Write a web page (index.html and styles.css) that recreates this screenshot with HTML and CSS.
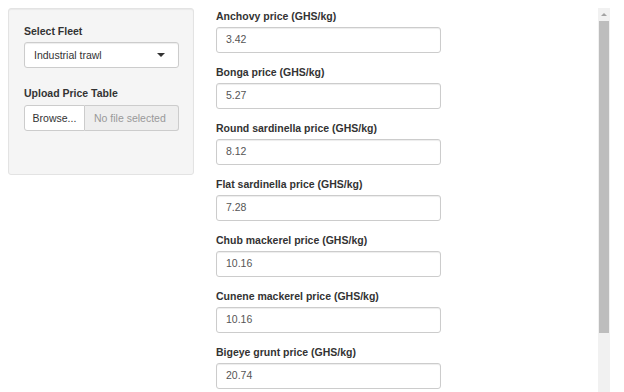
FILE: index.html
```html
<!DOCTYPE html>
<html>
<head>
<meta charset="utf-8">
<link rel="stylesheet" href="styles.css">
</head>
<body>
<div class="layout">
  <aside class="well">
    <div class="group group-select">
      <label class="lbl">Select Fleet</label>
      <div class="select">
        <span>Industrial trawl</span>
        <span class="caret"></span>
      </div>
    </div>
    <div class="group group-file">
      <label class="lbl">Upload Price Table</label>
      <div class="file">
        <span class="browse">Browse...</span>
        <span class="fname">No file selected</span>
      </div>
    </div>
  </aside>
  <main class="main">
    <div class="group"><label class="lbl">Anchovy price (GHS/kg)</label><div class="input">3.42</div></div>
    <div class="group"><label class="lbl">Bonga price (GHS/kg)</label><div class="input">5.27</div></div>
    <div class="group"><label class="lbl">Round sardinella price (GHS/kg)</label><div class="input">8.12</div></div>
    <div class="group"><label class="lbl">Flat sardinella price (GHS/kg)</label><div class="input">7.28</div></div>
    <div class="group"><label class="lbl">Chub mackerel price (GHS/kg)</label><div class="input">10.16</div></div>
    <div class="group"><label class="lbl">Cunene mackerel price (GHS/kg)</label><div class="input">10.16</div></div>
    <div class="group"><label class="lbl">Bigeye grunt price (GHS/kg)</label><div class="input">20.74</div></div>
  </main>
</div>
<div class="scrollbar">
  <div class="sb-up"><span class="sb-arrow"></span></div>
  <div class="sb-thumb"></div>
</div>
</body>
</html>
```
FILE: styles.css
```css
html, body {
  margin: 0;
  padding: 0;
  height: 100%;
  overflow: hidden;
  background: #fff;
}
body {
  font-family: "Liberation Sans", Arial, Helvetica, sans-serif;
  font-size: 10.5px;
  color: #333;
}
.layout {
  display: flex;
  align-items: flex-start;
  padding: 8px 0 0 8px;
}
.well {
  box-sizing: border-box;
  width: 186px;
  height: 167px;
  background: #f5f5f5;
  border: 1px solid #e3e3e3;
  border-radius: 3px;
  box-shadow: inset 0 1px 1px rgba(0,0,0,0.05);
  padding: 14.5px 14px 0 15px;
}
.main {
  margin-left: 22px;
  padding-top: 0.5px;
  width: 225px;
}
.lbl {
  display: block;
  font-weight: bold;
  line-height: 15px;
  margin-bottom: 3.75px;
}
.group {
  margin-bottom: 11.75px;
}
.input {
  box-sizing: border-box;
  height: 25.5px;
  border: 1px solid #ccc;
  border-radius: 3px;
  box-shadow: inset 0 1px 1px rgba(0,0,0,0.075);
  padding: 0 9px;
  line-height: 23.5px;
  color: #555;
  background: #fff;
}
.group-select {
  margin-bottom: 18.5px;
}
.select {
  box-sizing: border-box;
  height: 25.5px;
  border: 1px solid #ccc;
  border-radius: 3px;
  background: #fff;
  padding: 0 9px;
  display: flex;
  align-items: center;
  justify-content: space-between;
  color: #333;
  box-shadow: inset 0 1px 1px rgba(0,0,0,0.075);
}
.caret {
  width: 0;
  height: 0;
  border-left: 4px solid transparent;
  border-right: 4px solid transparent;
  border-top: 4px solid #333;
  margin-right: 4px;
}
.file {
  display: flex;
  height: 25.5px;
  box-sizing: border-box;
}
.browse {
  box-sizing: border-box;
  width: 61px;
  border: 1px solid #ccc;
  border-radius: 3px 0 0 3px;
  background: #fff;
  display: flex;
  align-items: center;
  justify-content: center;
  color: #333;
}
.fname {
  flex: 1;
  box-sizing: border-box;
  border: 1px solid #ccc;
  border-left: none;
  border-radius: 0 3px 3px 0;
  background: #eee;
  color: #999;
  display: flex;
  align-items: center;
  padding-left: 9px;
}
.scrollbar {
  position: absolute;
  left: 598px;
  top: 8px;
  width: 12px;
  bottom: 0;
  background: #f1f1f1;
}
.sb-up {
  height: 13px;
  display: flex;
  align-items: center;
  justify-content: center;
}
.sb-arrow {
  width: 0;
  height: 0;
  border-left: 3px solid transparent;
  border-right: 3px solid transparent;
  border-bottom: 3px solid #a3a3a3;
}
.sb-thumb {
  margin: 0 1px;
  height: 312px;
  background: #bdbdbd;
}
```
